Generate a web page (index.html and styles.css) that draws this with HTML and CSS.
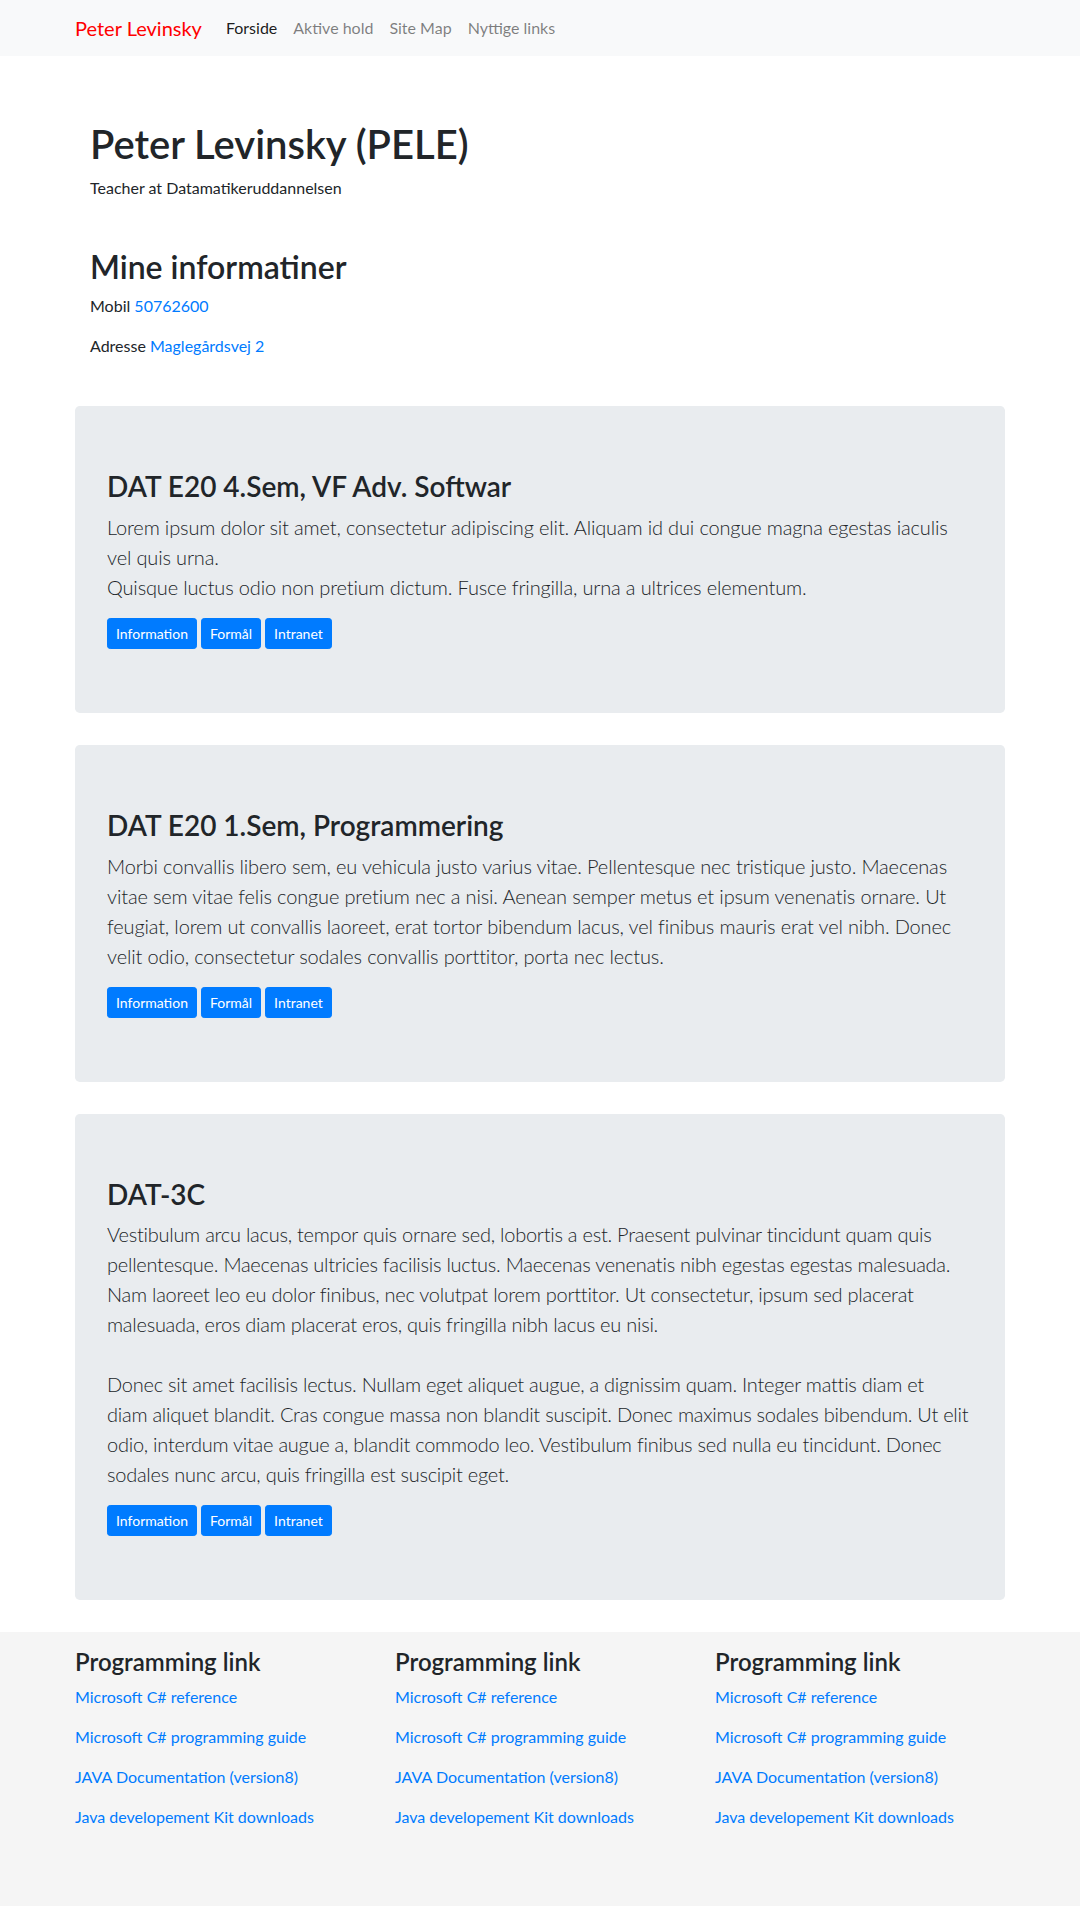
FILE: index.html
```html
<!DOCTYPE html>
<html lang="da">
<head>
<meta charset="utf-8">
<title>Peter Levinsky</title>
<link rel="stylesheet" href="styles.css">
</head>
<body>
<nav class="navbar">
  <div class="container nav-inner">
    <a class="brand" href="#">Peter Levinsky</a>
    <ul class="nav-links">
      <li><a class="nav-link active" href="#">Forside</a></li>
      <li><a class="nav-link" href="#">Aktive hold</a></li>
      <li><a class="nav-link" href="#">Site Map</a></li>
      <li><a class="nav-link" href="#">Nyttige links</a></li>
    </ul>
  </div>
</nav>

<main class="container">
  <section class="intro">
    <h1 class="title">Peter Levinsky (PELE)</h1>
    <p>Teacher at Datamatikeruddannelsen</p>
  </section>

  <section class="info">
    <h2 class="info-title">Mine informatiner</h2>
    <p>Mobil <a href="#">50762600</a></p>
    <p>Adresse <a href="#">Maglegårdsvej 2</a></p>
  </section>

  <div class="jumbo">
    <h3 class="jumbo-title">DAT E20 4.Sem, VF Adv. Softwar</h3>
    <p class="lead">Lorem ipsum dolor sit amet, consectetur adipiscing elit. Aliquam id dui congue magna egestas iaculis vel quis urna.<br>Quisque luctus odio non pretium dictum. Fusce fringilla, urna a ultrices elementum.</p>
    <div class="btns">
      <a class="btn" href="#">Information</a>
      <a class="btn" href="#">Formål</a>
      <a class="btn" href="#">Intranet</a>
    </div>
  </div>

  <div class="jumbo">
    <h3 class="jumbo-title">DAT E20 1.Sem, Programmering</h3>
    <p class="lead">Morbi convallis libero sem, eu vehicula justo varius vitae. Pellentesque nec tristique justo. Maecenas vitae sem vitae felis congue pretium nec a nisi. Aenean semper metus et ipsum venenatis ornare. Ut feugiat, lorem ut convallis laoreet, erat tortor bibendum lacus, vel finibus mauris erat vel nibh. Donec velit odio, consectetur sodales convallis porttitor, porta nec lectus.</p>
    <div class="btns">
      <a class="btn" href="#">Information</a>
      <a class="btn" href="#">Formål</a>
      <a class="btn" href="#">Intranet</a>
    </div>
  </div>

  <div class="jumbo">
    <h3 class="jumbo-title">DAT-3C</h3>
    <p class="lead lead-tight">Vestibulum arcu lacus, tempor quis ornare sed, lobortis a est. Praesent pulvinar tincidunt quam quis pellentesque. Maecenas ultricies facilisis luctus. Maecenas venenatis nibh egestas egestas malesuada. Nam laoreet leo eu dolor finibus, nec volutpat lorem porttitor. Ut consectetur, ipsum sed placerat malesuada, eros diam placerat eros, quis fringilla nibh lacus eu nisi.<br><br>Donec sit amet facilisis lectus. Nullam eget aliquet augue, a dignissim quam. Integer mattis diam et diam&nbsp;aliquet blandit. Cras congue massa non blandit suscipit. Donec maximus sodales bibendum. Ut elit odio, interdum vitae augue a, blandit commodo leo. Vestibulum finibus sed nulla eu tincidunt. Donec sodales nunc arcu, quis fringilla est suscipit eget.</p>
    <div class="btns">
      <a class="btn" href="#">Information</a>
      <a class="btn" href="#">Formål</a>
      <a class="btn" href="#">Intranet</a>
    </div>
  </div>
</main>

<footer class="footer">
  <div class="container footer-row">
    <div class="footer-col">
      <h4 class="footer-title">Programming link</h4>
      <p><a href="#">Microsoft C# reference</a></p>
      <p><a href="#">Microsoft C# programming guide</a></p>
      <p><a href="#">JAVA Documentation (version8)</a></p>
      <p><a href="#">Java developement Kit downloads</a></p>
    </div>
    <div class="footer-col">
      <h4 class="footer-title">Programming link</h4>
      <p><a href="#">Microsoft C# reference</a></p>
      <p><a href="#">Microsoft C# programming guide</a></p>
      <p><a href="#">JAVA Documentation (version8)</a></p>
      <p><a href="#">Java developement Kit downloads</a></p>
    </div>
    <div class="footer-col">
      <h4 class="footer-title">Programming link</h4>
      <p><a href="#">Microsoft C# reference</a></p>
      <p><a href="#">Microsoft C# programming guide</a></p>
      <p><a href="#">JAVA Documentation (version8)</a></p>
      <p><a href="#">Java developement Kit downloads</a></p>
    </div>
  </div>
</footer>
</body>
</html>
```

FILE: styles.css
```css
* { box-sizing: border-box; }

html { background: #f5f5f5; }

body {
  margin: 0;
  background: #fff;
  font-family: Lato, "Open Sans", "Noto Sans", sans-serif;
  font-size: 16px;
  line-height: 1.5;
  color: #212529;
}

a { color: #007bff; text-decoration: none; }

p { margin: 0 0 16px; }

h1, h2, h3, h4 {
  margin: 0 0 8px;
  font-weight: 600;
  line-height: 1.2;
}

.container {
  width: 960px;
  margin: 0 auto;
  padding: 0 15px;
}

/* navbar */
.navbar {
  background: #f8f9fa;
  padding: 8px 0;
}
.nav-inner {
  display: flex;
  align-items: center;
}
.brand {
  color: #ff0000;
  font-size: 20px;
  line-height: 30px;
  padding: 5px 0;
  margin-right: 16px;
}
.nav-links {
  list-style: none;
  margin: 0;
  padding: 0;
  display: flex;
}
.nav-link {
  display: block;
  padding: 8px;
  color: rgba(0, 0, 0, .5);
}
.nav-link.active { color: rgba(0, 0, 0, .9); }

/* intro */
.intro {
  padding: 64px 15px 0;
}
.title {
  font-size: 40px;
}
.info {
  padding: 32px 15px 32px;
}
.info-title { font-size: 32px; }

/* jumbotrons */
.jumbo {
  background: #e9ecef;
  border-radius: 4.8px;
  padding: 64px 32px;
  margin-bottom: 32px;
}
.jumbo-title { font-size: 28px; }
.lead {
  font-size: 20px;
  font-weight: 300;
  line-height: 1.5;
  letter-spacing: -0.15px;
}
.lead-tight { letter-spacing: -0.25px; }
.btns {
  display: flex;
  gap: 4px;
}
.btn {
  display: inline-block;
  background: #007bff;
  border: 1px solid #007bff;
  color: #fff;
  font-size: 14px;
  line-height: 21px;
  padding: 4px 8px;
  border-radius: 3.2px;
}

/* footer */
.footer {
  background: #f5f5f5;
  padding: 16px 0 64px;
}
.footer-row {
  display: grid;
  grid-template-columns: repeat(3, 1fr);
  padding: 0;
}
.footer-col { padding: 0 15px; }
.footer-title { font-size: 24px; }
```
